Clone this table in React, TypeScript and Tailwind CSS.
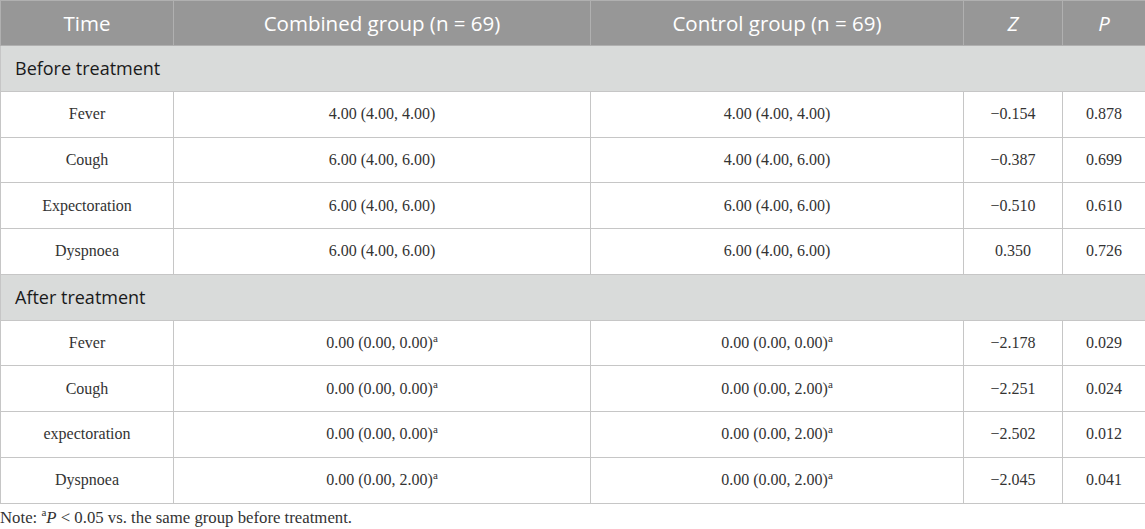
import React from "react";

const serif = { fontFamily: '"Liberation Serif", "Times New Roman", serif' };

type Row = { label: string; a: React.ReactNode; b: React.ReactNode; z: string; p: string };

const Sup = () => <sup className="text-[11px] top-[-0.55em]">a</sup>;

const before: Row[] = [
  { label: "Fever", a: "4.00 (4.00, 4.00)", b: "4.00 (4.00, 4.00)", z: "\u22120.154", p: "0.878" },
  { label: "Cough", a: "6.00 (4.00, 6.00)", b: "4.00 (4.00, 6.00)", z: "\u22120.387", p: "0.699" },
  { label: "Expectoration", a: "6.00 (4.00, 6.00)", b: "6.00 (4.00, 6.00)", z: "\u22120.510", p: "0.610" },
  { label: "Dyspnoea", a: "6.00 (4.00, 6.00)", b: "6.00 (4.00, 6.00)", z: "0.350", p: "0.726" },
];

const after: Row[] = [
  { label: "Fever", a: <>0.00 (0.00, 0.00)<Sup /></>, b: <>0.00 (0.00, 0.00)<Sup /></>, z: "\u22122.178", p: "0.029" },
  { label: "Cough", a: <>0.00 (0.00, 0.00)<Sup /></>, b: <>0.00 (0.00, 2.00)<Sup /></>, z: "\u22122.251", p: "0.024" },
  { label: "expectoration", a: <>0.00 (0.00, 0.00)<Sup /></>, b: <>0.00 (0.00, 2.00)<Sup /></>, z: "\u22122.502", p: "0.012" },
  { label: "Dyspnoea", a: <>0.00 (0.00, 2.00)<Sup /></>, b: <>0.00 (0.00, 2.00)<Sup /></>, z: "\u22122.045", p: "0.041" },
];

function DataRow({ r }: { r: Row }) {
  const td = "border border-[#c6c6c6] text-center align-middle text-[16px] text-[#333]";
  return (
    <tr className="h-[45.75px]" style={serif}>
      <td className={td}>{r.label}</td>
      <td className={td}>{r.a}</td>
      <td className={td}>{r.b}</td>
      <td className={td}>{r.z}</td>
      <td className={td}>{r.p}</td>
    </tr>
  );
}

function Section({ title }: { title: string }) {
  return (
    <tr className="h-[45.75px] bg-[#d9dbda]">
      <td
        colSpan={5}
        className="border border-[#c6c6c6] px-[14px] text-left text-[18px] text-[#1a1a1a]"
        style={{ fontFamily: '"Open Sans", sans-serif' }}
      >
        {title}
      </td>
    </tr>
  );
}

export default function App() {
  const th = "border border-[#b0b0b0] font-normal text-white text-[20.5px] text-center align-middle";
  return (
    <div className="w-[1145px] h-[529px] bg-white overflow-hidden">
      <table className="w-[1145px] border-collapse table-fixed">
        <colgroup>
          <col className="w-[173px]" />
          <col className="w-[417px]" />
          <col className="w-[373px]" />
          <col className="w-[99px]" />
          <col className="w-[83px]" />
        </colgroup>
        <thead>
          <tr className="h-[45px] bg-[#979797]" style={{ fontFamily: '"Open Sans", sans-serif' }}>
            <th className={th}>Time</th>
            <th className={th}>Combined group (n = 69)</th>
            <th className={th}>Control group (n = 69)</th>
            <th className={th}><i>Z</i></th>
            <th className={th}><i>P</i></th>
          </tr>
        </thead>
        <tbody>
          <Section title="Before treatment" />
          {before.map((r) => (
            <DataRow key={"b" + r.label} r={r} />
          ))}
          <Section title="After treatment" />
          {after.map((r) => (
            <DataRow key={"a" + r.label} r={r} />
          ))}
        </tbody>
      </table>
      <div className="pt-[4px] text-[16.75px] text-[#333] leading-[20px]" style={serif}>
        Note: <sup className="text-[11px] top-[-0.6em]">a</sup><i>P</i> &lt; 0.05 vs. the same group before treatment.
      </div>
    </div>
  );
}
